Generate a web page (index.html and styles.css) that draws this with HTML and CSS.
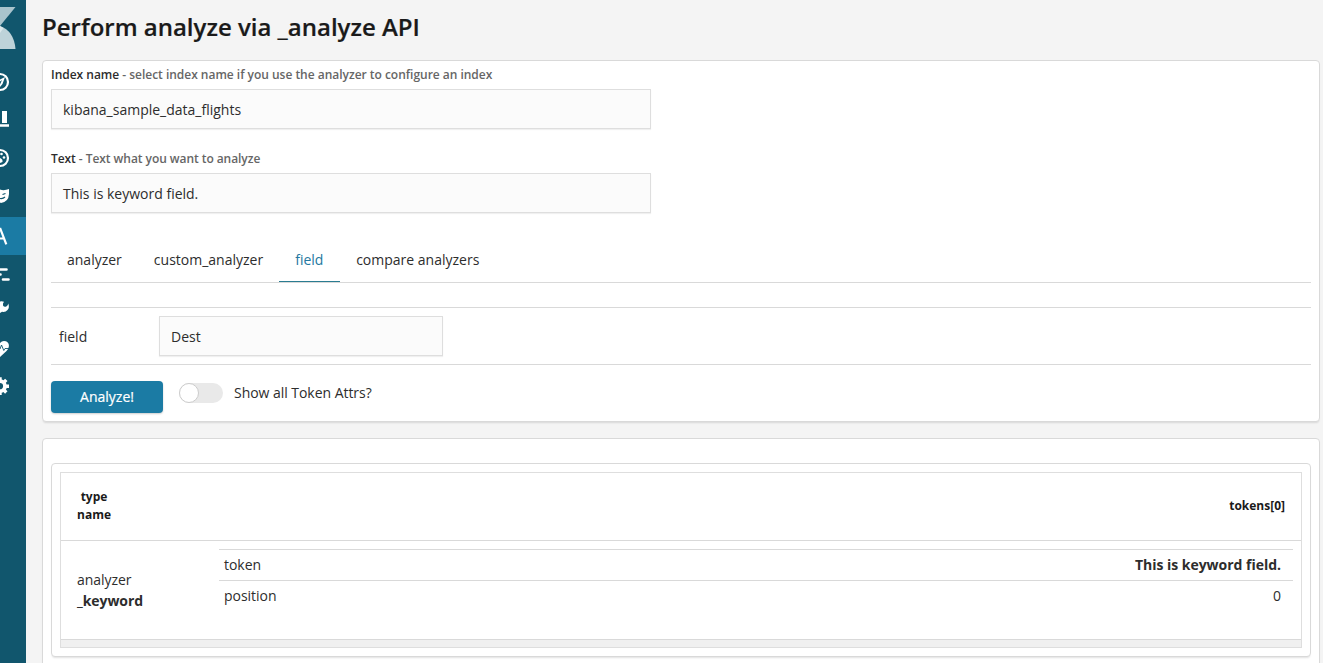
FILE: index.html
```html
<!DOCTYPE html>
<html lang="en">
<head>
<meta charset="utf-8">
<title>Analyze API</title>
<link rel="stylesheet" href="styles.css">
</head>
<body>
<div class="app">
  <nav class="sidebar">
    <div class="logo"><svg width="26" height="65" viewBox="0 0 26 65"><path fill="#a9c4cd" d="M0 7H15.500L0 26Z"/><path fill="#bed3d9" d="M0 26Q14 31 15.500 49H0Z"/><path fill="#dce8eb" d="M0 26L3.500 28L0 33Z"/></svg></div>
    <a class="nav-item"><svg viewBox="0 0 26 38"><circle cx="0" cy="17" r="8" fill="none" stroke="#fff" stroke-width="2.200"/><path fill="#fff" fill-rule="evenodd" d="M5 12L0 14.500V22L2.500 19ZM2 15L0 16.500V19.500Z"/></svg></a>
    <a class="nav-item"><svg viewBox="0 0 26 38"><path fill="#fff" d="M2 8H7V20H2ZM0 21.300H9V23.800H0Z"/></svg></a>
    <a class="nav-item"><svg viewBox="0 0 26 38"><circle cx="0" cy="17" r="8" fill="none" stroke="#fff" stroke-width="2.200"/><circle cx="1.500" cy="13" r="1.300" fill="#fff"/><circle cx="4" cy="16.500" r="1.300" fill="#fff"/><path fill="#fff" d="M0 17Q3 18 2.500 21L0 22Z"/></svg></a>
    <a class="nav-item"><svg viewBox="0 0 26 38"><path fill="#fff" d="M0 10.500Q4 12 9 10V15Q8.500 23 1 24L0 23.500Z"/><path fill="none" stroke="#11566d" stroke-width="1.200" d="M2.500 15.500L5.500 14.500M0 19.500Q3 20 5 18"/></svg></a>
    <a class="nav-item active"><svg viewBox="0 0 26 38"><path fill="none" stroke="#fff" stroke-width="2.200" d="M0 11L6.300 27.300M0 21.500H4"/></svg></a>
    <a class="nav-item"><svg viewBox="0 0 26 38"><path fill="none" stroke="#fff" stroke-width="2.600" stroke-linecap="round" d="M-4 14.500H6.500M-4 19.500H.5M3 24.500H8.500"/></svg></a>
    <a class="nav-item"><svg viewBox="0 0 26 38"><path fill="#fff" d="M0 8.500Q2 7.800 4 8.800Q2.500 10.500 3 12.500Q4.200 14.500 6.300 13.500Q8 12.500 8.300 10.500Q9.800 14.500 7.500 17Q5.500 19.500 2 18.800L0 20Z"/></svg></a>
    <a class="nav-item"><svg viewBox="0 0 26 38"><path fill="#fff" d="M0 12Q2.500 9 6 10.300Q9.500 12 8.800 15.800Q8.500 18 6.500 20L0 26Z"/><path fill="none" stroke="#11566d" stroke-width=".9" d="M0 18L1.500 14L3.800 19.500L5 17.500H9"/></svg></a>
    <a class="nav-item"><svg viewBox="0 0 26 38"><path fill="none" stroke="#fff" stroke-width="3.800" d="M0 12.200A5 5 0 0 1 0 22.200"/><path stroke="#fff" stroke-width="3.400" d="M5 17.200H9M3.500 13.700L6.300 10.900M3.500 20.700L6.300 23.500M0 12V8.300M0 22V26"/></svg></a>
  </nav>
  <main class="main">
    <h1 class="title">Perform analyze via _analyze API</h1>
    <section class="panel request">
      <label class="label"><b>Index name</b> - select index name if you use the analyzer to configure an index</label>
      <div class="input wide">kibana_sample_data_flights</div>
      <label class="label second"><b>Text</b> - Text what you want to analyze</label>
      <div class="input wide">This is keyword field.</div>
      <div class="tabs">
        <span class="tab">analyzer</span><span class="tab">custom_analyzer</span><span class="tab selected">field</span><span class="tab">compare analyzers</span>
      </div>
      <div class="field-row"><span class="field-name">field</span><div class="input narrow">Dest</div></div>
      <div class="actions">
        <button class="button">Analyze!</button>
        <span class="switch"><span class="knob"></span></span>
        <span class="switch-label">Show all Token Attrs?</span>
      </div>
    </section>
    <section class="panel results">
      <div class="panel result">
        <div class="table">
          <div class="table-head"><div class="type-name">type<br>name</div><div>tokens[0]</div></div>
          <div class="table-body">
            <div class="analyzer-name">analyzer<br><b>_keyword</b></div>
            <div class="attributes">
              <div class="attribute"><span>token</span><b>This is keyword field.</b></div>
              <div class="attribute"><span>position</span><span>0</span></div>
            </div>
          </div>
          <div class="table-foot"></div>
        </div>
      </div>
    </section>
  </main>
</div>
</body>
</html>
```
FILE: styles.css
```css
* { box-sizing: border-box; }
body { margin: 0; background: #f4f4f4; color: #2d2d2d; font: 14px/21px "Open Sans", sans-serif; }
.app { display: flex; height: 663px; overflow: hidden; }
.sidebar { width: 26px; flex: none; background: #11566d; }
.logo { height: 65px; }
.logo svg, .nav-item svg { display: block; }
.nav-item { display: block; height: 38px; }
.nav-item svg { width: 26px; height: 38px; }
.active { background: #1b7ba4; }
.main { flex: 1; padding: 0 3px 0 16px; }
.title { height: 60px; margin: 0; padding-top: 9px; font-size: 24px; line-height: 36px; font-weight: 600; color: #1a1a1a; -webkit-text-stroke: .2px; }
.panel { background: #fff; border: 1px solid #d9d9d9; border-radius: 4px; box-shadow: 0 2px 2px -1px rgba(0, 0, 0, .12); padding: 8px; }
.request { height: 362px; padding-top: 5px; }
.label { display: block; height: 23px; font-size: 12px; line-height: 18px; font-weight: 600; color: #666; letter-spacing: -.02px; }
.label b { font-weight: 600; color: #2d2d2d; }
.second { margin-top: 21px; letter-spacing: -.06px; }
.input { height: 40px; padding: 0 11px; line-height: 39px; background: #fbfbfb; border: 1px solid #dedede; box-shadow: 0 1px 1px rgba(0, 0, 0, .06); }
.wide { width: 600px; }
.narrow { width: 284px; }
.tabs { display: flex; height: 46px; margin-top: 24px; border-bottom: 1px solid #d9d9d9; }
.tab { height: 45px; padding: 0 16px; line-height: 45px; }
.selected { width: 61px; color: #2478a0; border-bottom: 1px solid #2a7c91; }
.field-row { display: flex; align-items: center; height: 58px; margin-top: 24px; border-top: 1px solid #d9d9d9; border-bottom: 1px solid #d9d9d9; padding-left: 8px; }
.field-name { width: 100px; }
.actions { display: flex; align-items: flex-start; padding-top: 16px; }
.button { width: 112px; height: 32px; padding: 0; border: 0; border-radius: 4px; background: #1b7ba4; color: #fff; font: 14px/32px "Open Sans", sans-serif; box-shadow: 0 1px 2px rgba(0, 0, 0, .2); -webkit-text-stroke: .2px; }
.switch { width: 44px; height: 20px; margin: 2px 11px 0 16px; border-radius: 10px; background: #e9e9e9; }
.knob { display: block; width: 20px; height: 20px; border: 1px solid #ccc; border-radius: 50%; background: #fff; }
.switch-label { margin-top: 1px; letter-spacing: -.04px; }
.results { height: 240px; margin-top: 16px; padding-top: 24px; }
.result { height: 194px; }
.table { border: 1px solid #dedede; height: 176px; }
.table-head { display: flex; height: 68px; align-items: center; justify-content: space-between; padding: 0 16px 2px; border-bottom: 1px solid #d9d9d9; font-size: 12px; line-height: 18px; font-weight: 700; color: #1a1a1a; }
.type-name { text-align: center; }
.table-body { display: flex; height: 98px; }
.analyzer-name { width: 158px; padding: 28px 0 0 16px; letter-spacing: -.06px; }
.attributes { flex: 1; padding: 8px 8px 0 0; }
.attribute { display: flex; justify-content: space-between; height: 31px; padding: 4px 12px 0 5px; line-height: 21px; border-top: 1px solid #d9d9d9; letter-spacing: -.02px; }
.table-foot { height: 8px; border-top: 1px solid #d9d9d9; background: #f0f0f0; }
```
